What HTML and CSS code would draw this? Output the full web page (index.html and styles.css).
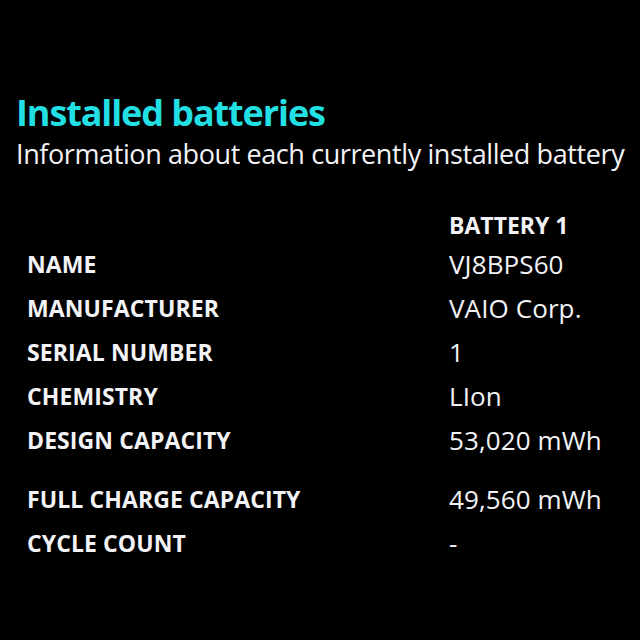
FILE: index.html
```html
<!DOCTYPE html>
<html>
<head>
<meta charset="utf-8">
<link rel="stylesheet" href="styles.css">
</head>
<body>
<div class="page">
  <h1 class="title">Installed batteries</h1>
  <p class="subtitle">Information about each currently installed battery</p>
  <div class="table">
    <div class="row head"><span class="label"></span><span class="value hdr">BATTERY 1</span></div>
    <div class="row"><span class="label">NAME</span><span class="value">VJ8BPS60</span></div>
    <div class="row"><span class="label">MANUFACTURER</span><span class="value">VAIO Corp.</span></div>
    <div class="row"><span class="label">SERIAL NUMBER</span><span class="value">1</span></div>
    <div class="row"><span class="label">CHEMISTRY</span><span class="value">LIon</span></div>
    <div class="row"><span class="label">DESIGN CAPACITY</span><span class="value">53,020 mWh</span></div>
    <div class="row gap"><span class="label">FULL CHARGE CAPACITY</span><span class="value">49,560 mWh</span></div>
    <div class="row"><span class="label">CYCLE COUNT</span><span class="value">-</span></div>
  </div>
</div>
</body>
</html>
```

FILE: styles.css
```css
html, body {
  margin: 0;
  padding: 0;
  background: #000;
}
body {
  width: 640px;
  height: 640px;
  overflow: hidden;
  font-family: "Open Sans", "Noto Sans", sans-serif;
  color: #f3f3f7;
}
.page {
  padding: 91px 0 0 16px;
}
.title {
  margin: 0;
  font-size: 36px;
  line-height: 44px;
  font-weight: 700;
  color: #22dfe4;
  letter-spacing: -1.1px;
}
.subtitle {
  margin: 0;
  font-size: 27px;
  line-height: 38px;
  font-weight: 400;
  letter-spacing: -0.4px;
}
.table {
  margin-top: 35px;
  padding-left: 11px;
  display: flex;
  flex-direction: column;
}
.row {
  display: grid;
  grid-template-columns: 422px 1fr;
  height: 44px;
  align-items: center;
}
.row.head {
  height: 34px;
}
.row.gap {
  margin-top: 15px;
}
.label {
  font-size: 23px;
  font-weight: 700;
  letter-spacing: 0.1px;
}
.value {
  font-size: 26px;
  font-weight: 500;
  letter-spacing: 0.1px;
}
.value.hdr {
  font-size: 23px;
  font-weight: 700;
  letter-spacing: 0;
}
```
